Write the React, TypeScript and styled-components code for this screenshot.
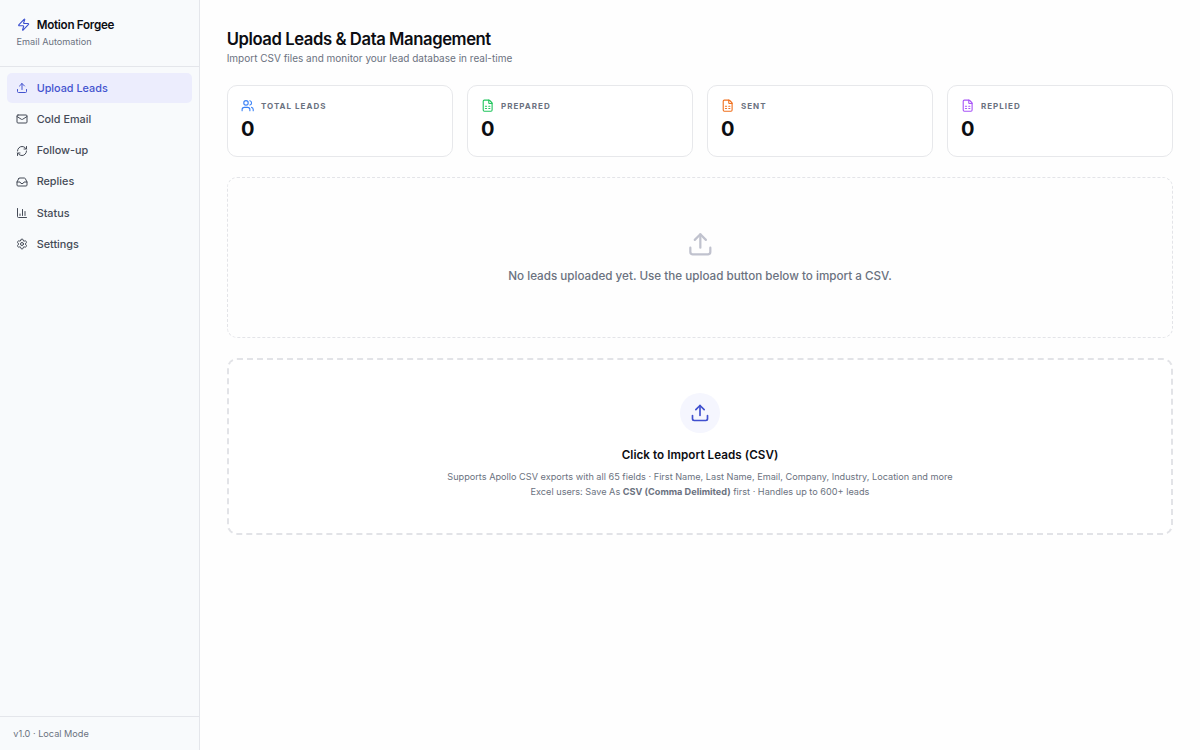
import React from "react";
import styled, { createGlobalStyle } from "styled-components";
import { Zap, Upload, Mail, RefreshCw, Inbox, ChartColumn, Settings, Users, FileSpreadsheet } from "lucide-react";

const GlobalStyle = createGlobalStyle`
  *, *::before, *::after { box-sizing: border-box; }
  html, body { margin: 0; padding: 0; background: #fefefe; }
  body { font-family: Inter, "Liberation Sans", sans-serif; color: #0c0d12; line-height: 1.5; }
  h1, h2, p { margin: 0; }
  svg { display: block; flex-shrink: 0; }
`;

const Shell = styled.div`
  display: flex;
  width: 100%;
  height: 100vh;
  overflow: hidden;
`;

const Sidebar = styled.aside`
  display: flex;
  flex-direction: column;
  width: 200px;
  flex-shrink: 0;
  background: #f8fafc;
  border-right: 1px solid #e4e6eb;
`;

const Brand = styled.div`
  height: 67px;
  padding: 16px 16.5px 0;
  border-bottom: 1px solid #e4e6eb;
`;

const BrandName = styled.div`
  display: flex;
  align-items: center;
  gap: 6.9px;
  height: 18px;
  font-size: 11.67px;
  font-weight: 600;
  line-height: 18px;
  letter-spacing: -0.29px;
  svg { color: #3b4fd0; }
`;

const BrandSub = styled.div`
  margin-top: 1px;
  font-size: 9.17px;
  line-height: 14px;
  color: #6b7280;
`;

const Nav = styled.nav`
  flex: 1;
  display: flex;
  flex-direction: column;
  gap: 1.67px;
  padding: 6.4px 6.67px;
`;

const NavItem = styled.a<{ $active?: boolean }>`
  display: flex;
  align-items: center;
  gap: 8.2px;
  height: 29.58px;
  padding: 0 9.8px;
  border-radius: 5px;
  font-size: 10.83px;
  font-weight: 500;
  line-height: 17px;
  color: ${(p) => (p.$active ? "#4353cf" : "#454b57")};
  background: ${(p) => (p.$active ? "#ecedfd" : "transparent")};
`;

const SidebarFooter = styled.div`
  height: 34.5px;
  padding: 10px 13.33px;
  border-top: 1px solid #e4e6eb;
  font-size: 9.17px;
  line-height: 13.75px;
  color: #6b7280;
`;

const Main = styled.main`
  flex: 1;
  min-width: 0;
  padding: 27.5px 26.67px 26.67px;
`;

const Title = styled.h1`
  font-size: 16.67px;
  font-weight: 600;
  line-height: 23.3px;
  letter-spacing: -0.415px;
`;

const Subtitle = styled.p`
  margin-top: 0.17px;
  font-size: 10px;
  line-height: 15px;
  color: #6b7280;
`;

const Stats = styled.section`
  display: grid;
  grid-template-columns: repeat(4, 1fr);
  gap: 13.33px;
  margin-top: 19px;
`;

const StatCard = styled.div`
  height: 72px;
  padding: 12.5px 13.33px;
  background: #fff;
  border: 1px solid #e7e8eb;
  border-radius: 10px;
`;

const StatLabel = styled.div<{ $color: string }>`
  display: flex;
  align-items: center;
  gap: 6.67px;
  height: 15px;
  font-size: 8px;
  font-weight: 700;
  letter-spacing: 1.01px;
  line-height: 15px;
  text-transform: uppercase;
  color: #6b7280;
  svg { color: ${(p) => p.$color}; }
  span { padding-top: 1.5px; }
`;

const StatValue = styled.div`
  margin-top: 0.5px;
  font-size: 20px;
  font-weight: 700;
  line-height: 30px;
`;

const EmptyState = styled.section`
  display: flex;
  flex-direction: column;
  align-items: center;
  height: 161.3px;
  margin-top: 20px;
  padding-top: 53px;
  border: 1px dashed #e3e4e8;
  border-radius: 10px;
  font-size: 11.67px;
  font-weight: 500;
  color: #6b7280;
  svg { color: #c0c2ce; margin-bottom: 10px; }
`;

const DropZone = styled.section`
  display: flex;
  flex-direction: column;
  align-items: center;
  height: 176.7px;
  margin-top: 19.9px;
  padding-top: 33px;
  background: #fff;
  border: 2px dashed #e2e3e7;
  border-radius: 10px;
`;

const IconCircle = styled.div`
  display: grid;
  place-items: center;
  width: 40px;
  height: 40px;
  border-radius: 50%;
  background: #f5f6fe;
  color: #3f4fce;
`;

const DropTitle = styled.h2`
  margin-top: 14.1px;
  font-size: 11.67px;
  font-weight: 600;
  line-height: 17.5px;
  letter-spacing: 0.05px;
`;

const DropHint = styled.p`
  margin-top: 4.2px;
  font-size: 9.17px;
  line-height: 15px;
  text-align: center;
  color: #6b7280;
`;

const navItems = [
  { label: "Upload Leads", Icon: Upload, active: true },
  { label: "Cold Email", Icon: Mail },
  { label: "Follow-up", Icon: RefreshCw },
  { label: "Replies", Icon: Inbox },
  { label: "Status", Icon: ChartColumn },
  { label: "Settings", Icon: Settings },
];

const stats = [
  { label: "Total Leads", Icon: Users, color: "#3b82f6" },
  { label: "Prepared", Icon: FileSpreadsheet, color: "#22c55e" },
  { label: "Sent", Icon: FileSpreadsheet, color: "#f0701e" },
  { label: "Replied", Icon: FileSpreadsheet, color: "#a855f7" },
];

export default function App() {
  return (
    <>
      <GlobalStyle />
      <Shell>
        <Sidebar>
          <Brand>
            <BrandName>
              <Zap size={13.33} />
              Motion Forgee
            </BrandName>
            <BrandSub>Email Automation</BrandSub>
          </Brand>
          <Nav>
            {navItems.map(({ label, Icon, active }) => (
              <NavItem key={label} $active={active}>
                <Icon size={12} />
                {label}
              </NavItem>
            ))}
          </Nav>
          <SidebarFooter>v1.0 · Local Mode</SidebarFooter>
        </Sidebar>
        <Main>
          <Title>Upload Leads &amp; Data Management</Title>
          <Subtitle>Import CSV files and monitor your lead database in real-time</Subtitle>
          <Stats>
            {stats.map(({ label, Icon, color }) => (
              <StatCard key={label}>
                <StatLabel $color={color}>
                  <Icon size={13.33} />
                  <span>{label}</span>
                </StatLabel>
                <StatValue>0</StatValue>
              </StatCard>
            ))}
          </Stats>
          <EmptyState>
            <Upload size={26.67} />
            <p>No leads uploaded yet. Use the upload button below to import a CSV.</p>
          </EmptyState>
          <DropZone>
            <IconCircle>
              <Upload size={20} />
            </IconCircle>
            <DropTitle>Click to Import Leads (CSV)</DropTitle>
            <DropHint>
              Supports Apollo CSV exports with all 65 fields · First Name, Last Name, Email, Company, Industry, Location and more
              <br />
              Excel users: Save As <strong>CSV (Comma Delimited)</strong> first · Handles up to 600+ leads
            </DropHint>
          </DropZone>
        </Main>
      </Shell>
    </>
  );
}
